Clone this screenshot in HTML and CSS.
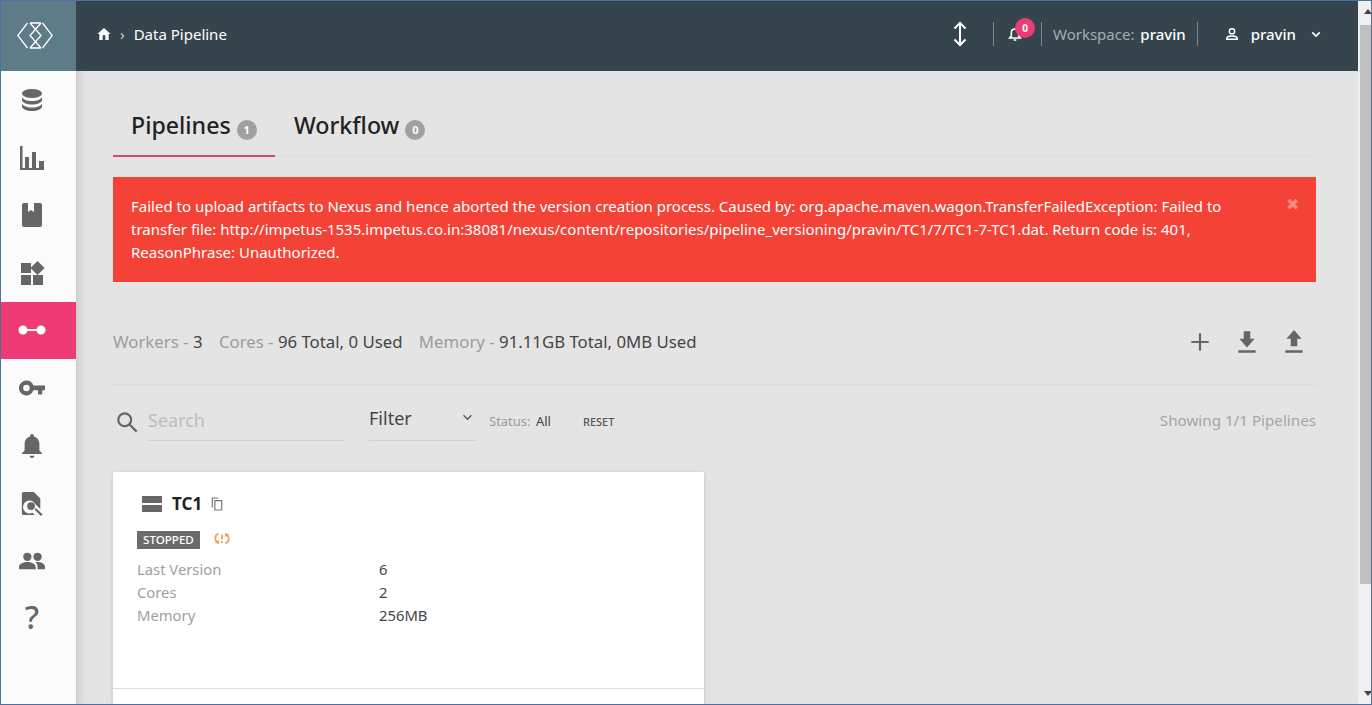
FILE: index.html
```html
<!DOCTYPE html>
<html lang="en">
<head>
<meta charset="utf-8">
<title>Data Pipeline</title>
<link rel="stylesheet" href="styles.css">
</head>
<body>
<div class="frame">
  <aside class="sidebar">
    <div class="logo">
      <svg width="36" height="28" viewBox="0 0 36 28" fill="none" stroke="#fff" stroke-width="1.3"><path d="M10.500 1 L.8 13.500 L10.500 26M25.500 1 L35.200 13.500 L25.500 26M13 1H24M13 26H24M13 1 L24 13.500 L13 26M24 1 L13 13.500 L24 26"/></svg>
    </div>
    <nav class="nav">
      <a class="nav-item"><svg class="ic" viewBox="0 0 24 24"><ellipse cx="12" cy="5.500" rx="10" ry="4.500"/><path d="M2 8.500c0 2.500 4.500 4.500 10 4.500s10-2 10-4.500v3.500c0 2.500-4.500 4.500-10 4.500S2 14.500 2 12zM2 15c0 2.500 4.500 4.500 10 4.500S22 17.500 22 15v3.500c0 2.500-4.500 4.500-10 4.500S2 21 2 18.500z"/></svg></a>
      <a class="nav-item"><svg class="ic" viewBox="0 0 24 24"><path d="M0 0h2.500v24H0zM5 11h4v13H5zM12 6h4v18h-4zM19 15h5v9h-5zM0 22h24v2H0z"/></svg></a>
      <a class="nav-item"><svg class="ic" viewBox="0 0 24 24"><path d="M4 0h4v9l3-2 3 2V0h6a2 2 0 0 1 2 2v20a2 2 0 0 1-2 2H4a2 2 0 0 1-2-2V2a2 2 0 0 1 2-2z"/></svg></a>
      <a class="nav-item"><svg class="ic" viewBox="0 0 24 24"><path d="M1 2h10v10H1zM1 14h10v10H1zM13 14h10v10H13zM17.500 0l7 7-7 7-7-7z"/></svg></a>
      <a class="nav-item active"><svg class="ic" viewBox="0 0 28 12"><circle cx="5" cy="6" r="4.500"/><circle cx="23" cy="6" r="4.500"/><path d="M5 5h18v2H5z"/></svg></a>
      <a class="nav-item"><svg class="ic" viewBox="0 0 28 16"><path d="M8 0a8 8 0 0 1 7.500 5.200H28v5.300h-3V15h-4.500v-4.500h-5A8 8 0 1 1 8 0zm0 4.500a3.500 3.500 0 1 0 0 7 3.500 3.500 0 0 0 0-7z"/></svg></a>
      <a class="nav-item"><svg class="ic" viewBox="0 0 24 26"><path d="M12 0c1.200 0 2 .8 2 2v.8c3.800 1 6 4.200 6 8v7l3 3v1H1v-1l3-3v-7c0-3.800 2.200-7 6-8V2c0-1.200.8-2 2-2zM9.500 23.500h5a2.500 2.500 0 0 1-5 0z"/></svg></a>
      <a class="nav-item"><svg class="ic" viewBox="0 0 24 26"><path fill-rule="evenodd" d="M3 0h11l7 7v11.500l-5.500-5.500a7 7 0 1 0-3 9.500L15 25H3a2 2 0 0 1-2-2V2a2 2 0 0 1 2-2zM11 11a4.200 4.200 0 1 1 0 8.400 4.200 4.200 0 0 1 0-8.400zM16.500 17.500l7 7-1.800 1.500-7-7z"/></svg></a>
      <a class="nav-item"><svg class="ic" viewBox="0 0 28 18"><circle cx="9" cy="4.500" r="4.500"/><circle cx="20" cy="4.500" r="4.500"/><path d="M0 18v-3c0-3 5-5 9-5s9 2 9 5v3zM20 10c4 0 8 2 8 5v3h-8v-3c0-2-1-4-2.500-4.700.8-.2 1.700-.3 2.500-.3z"/></svg></a>
      <a class="nav-item"><span class="help">?</span></a>
    </nav>
  </aside>
  <div class="main">
    <header class="topbar">
      <div class="crumbs">
        <svg class="home" viewBox="0 0 24 24"><path d="M10 21v-7h4v7h5v-9h3L12 3 2 12h3v9z"/></svg>
        <span class="sep">›</span>
        <span>Data Pipeline</span>
      </div>
      <div class="top-right">
        <svg class="updown" viewBox="0 0 16 26" fill="none" stroke="#fff" stroke-width="2"><path d="M8 2v22M2.500 7.500 8 2l5.500 5.500M2.500 18.500 8 24l5.500-5.500"/></svg>
        <span class="vr vr-a"></span>
        <span class="bell-wrap">
          <svg class="bell" viewBox="0 0 24 24" fill="none" stroke="#fff" stroke-width="2.400"><path d="M4 18h16l-2.500-3v-5c0-3-2-5.500-5.500-5.500S6.500 7 6.500 10v5z"/><path d="M10 21h4" /></svg>
          <span class="badge">0</span>
        </span>
        <span class="vr vr-b"></span>
        <span class="ws"><span class="ws-label">Workspace:</span> pravin</span>
        <span class="vr vr-c"></span>
        <svg class="user" viewBox="0 0 24 24" fill="none" stroke="#fff" stroke-width="2.200"><circle cx="12" cy="8" r="4"/><path d="M4 20v-1c0-2.500 4-4 8-4s8 1.500 8 4v1z"/></svg>
        <span class="uname">pravin</span>
        <svg class="chev" viewBox="0 0 12 8" fill="none" stroke="#fff" stroke-width="2"><path d="M1.500 1.500 6 6l4.500-4.500"/></svg>
      </div>
    </header>
    <main class="content">
      <div class="tabs">
        <div class="tab on">Pipelines <span class="count">1</span></div>
        <div class="tab">Workflow <span class="count">0</span></div>
      </div>
      <div class="alert">
        <p>Failed to upload artifacts to Nexus and hence aborted the version creation process. Caused by: org.apache.maven.wagon.TransferFailedException: Failed to transfer file: http://impetus-1535.impetus.co.in:38081/nexus/content/repositories/pipeline_versioning/pravin/TC1/7/TC1-7-TC1.dat. Return code is: 401, ReasonPhrase: Unauthorized.</p>
        <span class="close">✖</span>
      </div>
      <div class="stats">
        <div class="stat-text">
          <span class="mute">Workers -</span> <span class="val s1">3</span>
          <span class="mute">Cores -</span> <span class="val s2">96 Total, 0 Used</span>
          <span class="mute">Memory -</span> <span class="val">91.11GB Total, 0MB Used</span>
        </div>
        <div class="actions">
          <svg viewBox="0 0 24 24"><path d="M11 4h2v7h7v2h-7v7h-2v-7H4v-2h7z"/></svg>
          <svg viewBox="0 0 24 24"><path d="M19 9h-4V2H9v7H5l7 8zM4 19.500h16V22H4z"/></svg>
          <svg viewBox="0 0 24 24"><path d="M9 16h6V9h4l-7-8-7 8h4zM4 19.500h16V22H4z"/></svg>
        </div>
      </div>
      <div class="filters">
        <svg class="search-ic" viewBox="0 0 24 24" fill="none" stroke="#666" stroke-width="2.400"><circle cx="9.500" cy="9.500" r="7"/><path d="m14.500 14.500 8 8"/></svg>
        <div class="search">Search</div>
        <div class="filter">Filter<svg viewBox="0 0 12 8" fill="none" stroke="#555" stroke-width="1.500"><path d="M1.500 1.500 6 6l4.500-4.500"/></svg></div>
        <div class="status"><span class="mute status-label">Status:</span> All</div>
        <div class="reset">RESET</div>
        <div class="showing">Showing 1/1 Pipelines</div>
      </div>
      <article class="card">
        <div class="card-head">
          <span class="stack"><i></i><i></i></span>
          <span class="name">TC1</span>
          <svg class="copy" viewBox="0 0 14 16" fill="none" stroke="#777" stroke-width="1.400"><path d="M4.500 4h8v11h-8zM1.500 12V1h7"/></svg>
        </div>
        <div class="state">
          <span class="tag">STOPPED</span>
          <svg class="sync" viewBox="0 0 16 13" fill="none" stroke="#e8a765" stroke-width="1.800"><path d="M4.500 1.500C2 2.500 1 5 1.500 7.500c.3 1.300 1 2.500 2.500 3.500M1 9.500l3 1.500.5-2.500M11.500 11.500c2.500-1 3.500-3.500 3-6-.3-1.300-1-2.500-2.500-3.500M15 3.500 12 2l-.5 2.500M8 2.500v5M8 9v2"/></svg>
        </div>
        <dl class="props">
          <dt>Last Version</dt><dd>6</dd>
          <dt>Cores</dt><dd>2</dd>
          <dt>Memory</dt><dd>256MB</dd>
        </dl>
        <div class="card-foot"></div>
      </article>
    </main>
  </div>
  <div class="scrollbar"><span class="up"></span><span class="thumb"></span><span class="down"></span></div>
</div>
</body>
</html>
```
FILE: styles.css
```css
* { box-sizing: border-box; }
html, body { margin: 0; height: 100%; overflow: hidden; }
body { font-family: "Noto Sans", "Open Sans", sans-serif; color: #333; background: #e4e4e4; }
.frame { display: flex; width: 1372px; height: 705px; border: 1px solid #4a72a8; overflow: hidden; }
.sidebar { width: 75px; flex: none; background: #fbfbfb; display: flex; flex-direction: column; }
.logo { height: 70px; padding-right: 7px; background: #5e7b88; display: flex; align-items: center; justify-content: center; flex: none; }
.nav { display: flex; flex-direction: column; }
.nav-item { height: 57.700px; padding-right: 13px; display: flex; align-items: center; justify-content: center; }
.nav-item.active { background: #ef3b74; padding-bottom: 2px; }
.nav-item.active .ic { fill: #fff; width: 28px; }
.ic { width: 26px; height: 24px; fill: #666; }
.help { font-size: 32px; font-weight: 500; color: #666; line-height: 1; padding-bottom: 4px; }
.main { flex: 1; min-width: 0; display: flex; flex-direction: column; box-shadow: inset 8px 0 8px -6px rgba(0,0,0,.15); }
.topbar { height: 70px; flex: none; background: #36454d; color: #fff; display: flex; align-items: center; justify-content: space-between; padding-left: 20px; padding-bottom: 4px; font-size: 15px; }
.crumbs { display: flex; align-items: center; }
.home { width: 16px; height: 16px; fill: #fff; }
.sep { margin: 0 9px 0 8px; color: #c5ccd0; }
.top-right { display: flex; align-items: center; width: 406px; position: relative; height: 100%; }
.updown { width: 16px; height: 26px; }
.vr { width: 1px; height: 24px; background: #7b878d; }
.vr-a { margin-left: 25px; }
.bell-wrap { position: relative; display: flex; margin-left: 13px; }
.bell { width: 16px; height: 16px; }
.badge { position: absolute; left: 8px; top: -8px; width: 20px; height: 20px; border-radius: 50%; background: #ef3b74; font-size: 10px; font-weight: 700; display: flex; align-items: center; justify-content: center; }
.vr-b { margin-left: 18px; }
.ws { margin-left: 11px; font-weight: 500; white-space: nowrap; }
.ws-label { color: #a3adb2; font-weight: 400; margin-right: 2px; }
.vr-c { margin-left: 11px; }
.user { width: 16px; height: 16px; margin-left: 26px; }
.uname { margin-left: 11px; font-weight: 500; }
.chev { width: 10px; height: 7px; margin-left: 15px; }
.content { flex: 1; padding: 0 42px 0 37px; min-height: 0; }
.tabs { display: flex; height: 86px; padding-top: 37px; border-bottom: 1px solid #dcdcdc; }
.tab { font-size: 23.200px; font-weight: 500; color: #222; padding: 0 18px; width: 162px; height: 49px; white-space: nowrap; line-height: 34px; }
.tab + .tab { width: auto; padding-left: 19px; }
.tab.on { border-bottom: 2px solid #d9466f; }
.count { display: inline-block; width: 20px; height: 20px; border-radius: 50%; background: #a0a0a0; color: #fff; font-size: 11px; font-weight: 700; text-align: center; line-height: 20px; vertical-align: 0; }
.alert { margin-top: 20px; height: 105px; background: #f44336; color: #fff; padding: 18px; position: relative; font-size: 15px; line-height: 23px; }
.alert p { margin: 0; width: 1100px; }
.close { position: absolute; right: 17px; top: 16px; font-size: 16px; color: #f98a82; }
.stats { display: flex; justify-content: space-between; align-items: center; height: 103px; padding: 16px 9px 0 0; border-bottom: 1px solid #dcdcdc; font-size: 16.800px; }
.stat-text { white-space: nowrap; }
.mute { color: #9c9c9c; }
.val { color: #444; }
.s1, .s2 { margin-right: 12px; }
.actions { display: flex; gap: 21px; margin-top: 2px; }
.actions svg { width: 26px; height: 26px; fill: #666; }
.filters { display: flex; align-items: center; height: 72px; font-size: 13px; }
.search-ic { width: 22px; height: 22px; flex: none; margin: 2px 0 0 3px; }
.search { margin-left: 10px; width: 197px; height: 36px; margin-top: 4px; border-bottom: 1px solid #d2d2d2; font-size: 18px; color: #bdbdbd; line-height: 30px; }
.filter { margin-left: 24px; width: 108px; height: 36px; margin-top: 4px; border-bottom: 1px solid #d2d2d2; font-size: 18px; color: #444; line-height: 26px; position: relative; }
.filter svg { position: absolute; right: 4px; top: 9px; width: 11px; height: 7px; }
.status { margin-left: 12px; color: #444; }
.status-label { margin-right: 2px; }
.reset { margin-left: 32px; font-size: 11px; font-weight: 500; color: #555; }
.showing { margin-left: auto; margin-top: -2px; font-size: 15.200px; color: #a5a5a5; }
.card { margin-top: 15px; width: 591px; height: 300px; background: #fff; padding: 20px 24px 0; box-shadow: 0 1px 4px rgba(0,0,0,.15); position: relative; }
.card-head { display: flex; align-items: center; height: 23px; margin-left: 5px; }
.stack { display: flex; flex-direction: column; gap: 2px; width: 20px; }
.stack i { display: block; height: 7px; background: #666; }
.name { margin-left: 10px; font-size: 17px; font-weight: 700; color: #222; }
.copy { width: 12px; height: 14px; margin-left: 9px; }
.state { display: flex; align-items: center; margin-top: 14px; height: 22px; }
.tag { background: #6b6b6b; color: #fff; font-size: 11.600px; font-weight: 500; height: 18px; line-height: 18px; padding: 0 6px; }
.sync { width: 16px; height: 13px; margin-left: 14px; margin-top: -4px; }
.props { display: grid; grid-template-columns: 242px 1fr; margin: 7px 0 0; font-size: 14.800px; line-height: 23px; }
.props dt { color: #a0a0a0; }
.props dd { margin: 0; color: #444; }
.card-foot { position: absolute; left: 0; right: 0; top: 216px; border-top: 1px solid #dedede; }
.scrollbar { width: 13px; flex: none; background: #f0f0f0; display: flex; flex-direction: column; align-items: flex-end; }
.up, .down { width: 0; height: 0; margin-right: -1px; border-left: 4px solid transparent; border-right: 4px solid transparent; }
.up { margin-top: 8px; border-bottom: 5px solid #444; }
.thumb { margin-top: 11px; width: 11px; height: 559px; background: #c0c0c0; }
.down { margin-top: auto; margin-bottom: 8px; border-top: 5px solid #444; }
```
